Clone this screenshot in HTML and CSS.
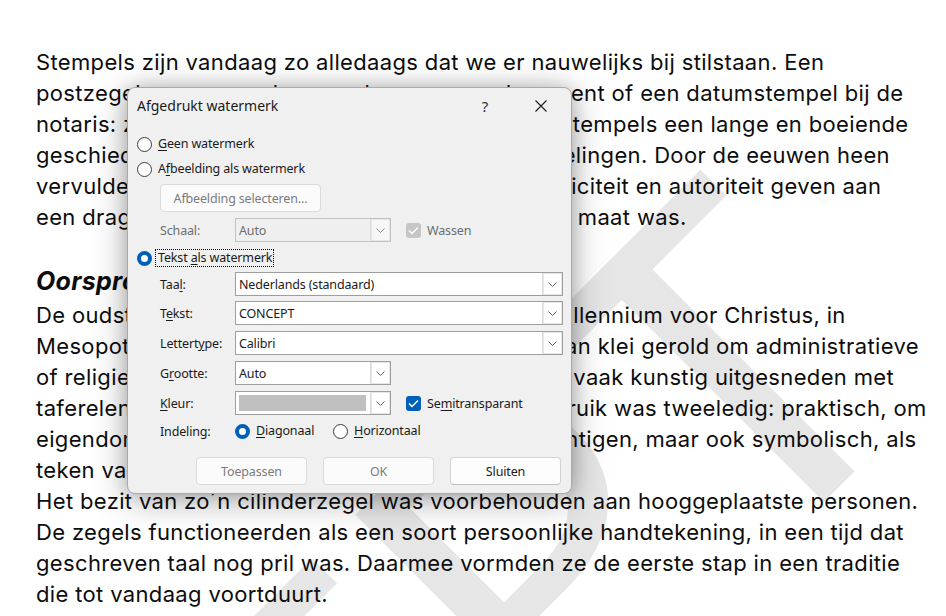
FILE: index.html
```html
<!DOCTYPE html>
<html lang="nl">
<head>
<meta charset="utf-8">
<title>Afgedrukt watermerk</title>
<link rel="stylesheet" href="styles.css">
</head>
<body>
<div class="page">
  <svg class="watermark" width="946" height="616" viewBox="0 0 946 616" aria-hidden="true">
    <text x="933" y="393" transform="rotate(-45 933 393)" text-anchor="end" class="wm-text">CONCEPT</text>
  </svg>

  <div class="doc">
    <p class="para">Stempels zijn vandaag zo alledaags dat we er nauwelijks bij stilstaan. Een<br>postzegel op een omslag, een logo op een document of een datumstempel bij de<br>notaris: zonder dat we het vaak merken, hebben stempels een lange en boeiende<br>geschiedenis vol culturele en technische ontwikkelingen. Door de eeuwen heen<br>vervulden ze een cruciale rol: ze moesten authenticiteit en autoriteit geven aan<br>een drager in een tijd waarin geschrift nog niet de maat was.</p>
    <h2 class="heading">Oorsprong in het oude Mesopotamië</h2>
    <p class="para">De oudste stempels dateren zelfs uit het vierde millennium voor Christus, in<br>Mesopotamië. Deze zegels werden op tabletten van klei gerold om administratieve<br>of religieuze documenten te bezegelen. Ze waren vaak kunstig uitgesneden met<br>taferelen over mythen en dagelijks leven. Het gebruik was tweeledig: praktisch, om<br>eigendom en de belangrijke transacties te bekrachtigen, maar ook symbolisch, als<br>teken van macht en status.<br>Het bezit van zo´n cilinderzegel was voorbehouden aan hooggeplaatste personen.<br>De zegels functioneerden als een soort persoonlijke handtekening, in een tijd dat<br>geschreven taal nog pril was. Daarmee vormden ze de eerste stap in een traditie<br>die tot vandaag voortduurt.</p>
  </div>

  <div class="dialog">
    <div class="titlebar">
      <span class="title">Afgedrukt watermerk</span>
      <span class="tb-btn help">?</span>
      <span class="tb-btn close"><svg width="12" height="12" viewBox="0 0 12 12"><path d="M0.5 0.5L11.5 11.5M11.5 0.5L0.5 11.5" stroke="#1b1b1b" stroke-width="1.1" fill="none"/></svg></span>
    </div>
    <div class="body">
      <div class="opt row-a"><span class="radio"></span><span class="otext"><u>G</u>een watermerk</span></div>
      <div class="opt row-b"><span class="radio"></span><span class="otext">A<u>f</u>beelding als watermerk</span></div>
      <div class="sub row-c"><span class="btn pick disabled">Afbeelding selecteren...</span></div>
      <div class="sub row-d">
        <span class="flabel disabled">Schaal:</span>
        <span class="combo narrow off"><span class="val">Auto</span><span class="arr"><svg width="9" height="5" viewBox="0 0 9 5"><path d="M0.5 0.5L4.5 4.5L8.5 0.5" stroke="#8a8a8a" fill="none"/></svg></span></span>
        <span class="check off"><svg width="11" height="9" viewBox="0 0 11 9"><path d="M1 4.5L4 7.5L10 1.5" stroke="#fff" stroke-width="1.4" fill="none"/></svg></span>
        <span class="ctext disabled">Wassen</span>
      </div>
      <div class="opt row-e"><span class="radio on"></span><span class="otext focus">Tekst <u>a</u>ls watermerk</span></div>
      <div class="sub row-f">
        <span class="flabel">Taa<u>l</u>:</span>
        <span class="combo full"><span class="val">Nederlands (standaard)</span><span class="arr"><svg width="9" height="5" viewBox="0 0 9 5"><path d="M0.5 0.5L4.5 4.5L8.5 0.5" stroke="#606060" fill="none"/></svg></span></span>
      </div>
      <div class="sub row-g">
        <span class="flabel">T<u>e</u>kst:</span>
        <span class="combo full"><span class="val">CONCEPT</span><span class="arr"><svg width="9" height="5" viewBox="0 0 9 5"><path d="M0.5 0.5L4.5 4.5L8.5 0.5" stroke="#606060" fill="none"/></svg></span></span>
      </div>
      <div class="sub row-h">
        <span class="flabel">Lettert<u>y</u>pe:</span>
        <span class="combo full"><span class="val">Calibri</span><span class="arr"><svg width="9" height="5" viewBox="0 0 9 5"><path d="M0.5 0.5L4.5 4.5L8.5 0.5" stroke="#606060" fill="none"/></svg></span></span>
      </div>
      <div class="sub row-h">
        <span class="flabel">G<u>r</u>ootte:</span>
        <span class="combo narrow"><span class="val">Auto</span><span class="arr"><svg width="9" height="5" viewBox="0 0 9 5"><path d="M0.5 0.5L4.5 4.5L8.5 0.5" stroke="#606060" fill="none"/></svg></span></span>
      </div>
      <div class="sub row-h">
        <span class="flabel"><u>K</u>leur:</span>
        <span class="combo narrow"><span class="val"><span class="swatch"></span></span><span class="arr"><svg width="9" height="5" viewBox="0 0 9 5"><path d="M0.5 0.5L4.5 4.5L8.5 0.5" stroke="#606060" fill="none"/></svg></span></span>
        <span class="check on"><svg width="11" height="9" viewBox="0 0 11 9"><path d="M1 4.5L4 7.5L10 1.5" stroke="#fff" stroke-width="1.4" fill="none"/></svg></span>
        <span class="ctext">Se<u>m</u>itransparant</span>
      </div>
      <div class="sub row-i">
        <span class="flabel">Indeling:</span>
        <span class="inline-opt first"><span class="radio on"></span><span class="otext"><u>D</u>iagonaal</span></span>
        <span class="inline-opt"><span class="radio"></span><span class="otext"><u>H</u>orizontaal</span></span>
      </div>
    </div>
    <div class="btnrow">
      <span class="btn action disabled">Toepassen</span>
      <span class="btn action disabled">OK</span>
      <span class="btn action">Sluiten</span>
    </div>
  </div>
</div>
</body>
</html>
```

FILE: styles.css
```css
* { box-sizing: border-box; }

html, body {
  margin: 0;
  padding: 0;
  background: #ffffff;
}

.page {
  position: relative;
  width: 946px;
  height: 616px;
  overflow: hidden;
  background: #ffffff;
}

/* ---------- watermark ---------- */
.watermark {
  position: absolute;
  left: 0;
  top: 0;
  z-index: 0;
}

.wm-text {
  font-family: "Lato", "Open Sans", sans-serif;
  font-size: 450px;
  fill: #e6e6e6;
}

/* ---------- document ---------- */
.doc {
  position: relative;
  z-index: 1;
  padding: 47px 0 0 36px;
  font-family: "Inter", "Noto Sans", sans-serif;
  font-size: 22px;
  letter-spacing: 0.35px;
  line-height: 31px;
  color: #0d0d0d;
}

.para {
  margin: 0;
  white-space: nowrap;
}

.heading {
  margin: 33px 0 3px;
  font-size: 25px;
  font-weight: 700;
  font-style: italic;
  letter-spacing: 0.3px;
  line-height: 31px;
  white-space: nowrap;
}

/* ---------- dialog ---------- */
.dialog {
  position: absolute;
  z-index: 5;
  left: 127px;
  top: 87px;
  width: 445px;
  height: 407px;
  background: #f0f0f0;
  border: 1px solid #a9a9a9;
  border-radius: 8px;
  box-shadow: 0 6px 34px rgba(0, 0, 0, 0.34), 0 0 16px rgba(0, 0, 0, 0.14);
  font-family: "Noto Sans", "Open Sans", sans-serif;
  font-size: 12.5px;
  letter-spacing: -0.15px;
  color: #1a1a1a;
}

.titlebar {
  height: 35px;
  display: flex;
  align-items: center;
  padding: 0 8px 0 9px;
}

.title {
  flex: 1;
  font-size: 14px;
  letter-spacing: 0;
  color: #1a1a1a;
}

.tb-btn {
  height: 30px;
  display: flex;
  align-items: center;
  justify-content: center;
}

.help {
  width: 40px;
  font-size: 15px;
  color: #333333;
  margin-right: 14px;
}

.close {
  width: 44px;
}

.body {
  display: flex;
  flex-direction: column;
  padding: 0 8px 0 9px;
}

.opt, .sub {
  display: flex;
  align-items: center;
}

.sub {
  padding-left: 23px;
}

.row-a { margin-top: 10px; height: 22px; }
.row-b { margin-top: 3px; height: 22px; }
.row-c { margin-top: 4px; height: 28px; }
.row-d { margin-top: 6px; height: 24px; }
.row-e { margin-top: 7px; height: 18px; }
.row-f { margin-top: 5px; height: 24px; }
.row-g { margin-top: 5px; height: 24px; }
.row-h { margin-top: 6px; height: 24px; }
.row-i { margin-top: 6px; height: 20px; }

u {
  text-decoration-thickness: 1px;
  text-underline-offset: 2px;
}

.radio {
  flex: none;
  width: 15px;
  height: 15px;
  border: 1px solid #3c3c3c;
  border-radius: 50%;
  background: #ffffff;
}

.radio.on {
  border: 4px solid #005fb8;
  background: #ffffff;
}

.otext {
  margin-left: 6px;
  line-height: 16px;
  white-space: nowrap;
}

.otext.focus {
  margin-left: 3px;
  padding: 0 1px 0 2px;
  border: 1px dotted #000000;
  line-height: 16px;
}

.disabled {
  color: #6e6e6e;
}

.flabel {
  flex: none;
  width: 75px;
  white-space: nowrap;
}

.combo {
  flex: none;
  display: flex;
  height: 24px;
  background: #ffffff;
  border: 1px solid #9e9e9e;
}

.combo.full { width: 328px; }
.combo.narrow { width: 156px; }

.combo.off {
  background: #efefef;
  border-color: #c2c2c2;
  color: #6e6e6e;
}

.combo .val {
  flex: 1;
  display: flex;
  align-items: center;
  padding-left: 3px;
  white-space: nowrap;
}

.combo .arr {
  flex: none;
  width: 20px;
  display: flex;
  align-items: center;
  justify-content: center;
  background: #ffffff;
  border-left: 1px solid #dcdcdc;
  box-shadow: inset 0 0 0 1px #e6e6e6;
}

.combo.off .arr {
  background: #f7f7f7;
}

.swatch {
  display: block;
  width: 127px;
  height: 16px;
  background: #c0c0c0;
}

.check {
  flex: none;
  width: 15px;
  height: 15px;
  margin-left: 15px;
  border-radius: 3px;
  display: flex;
  align-items: center;
  justify-content: center;
}

.check.on { background: #005fb8; }
.check.off { background: #c6c6c6; }

.ctext {
  margin-left: 6px;
  white-space: nowrap;
}

.inline-opt {
  display: flex;
  align-items: center;
}

.inline-opt.first {
  width: 98px;
}

.btn {
  display: flex;
  align-items: center;
  justify-content: center;
  height: 28px;
  background: #fdfdfd;
  border: 1px solid #d3d3d3;
  border-bottom-color: #bdbdbd;
  border-radius: 4px;
  white-space: nowrap;
}

.btn.disabled {
  color: #7c7c7c;
  background: #fbfbfb;
  border-color: #dadada;
}

.btn.pick {
  width: 161px;
}

.btnrow {
  display: flex;
  justify-content: flex-end;
  gap: 16px;
  margin-top: 16px;
  padding-right: 10px;
}

.btn.action {
  width: 111px;
}
```
